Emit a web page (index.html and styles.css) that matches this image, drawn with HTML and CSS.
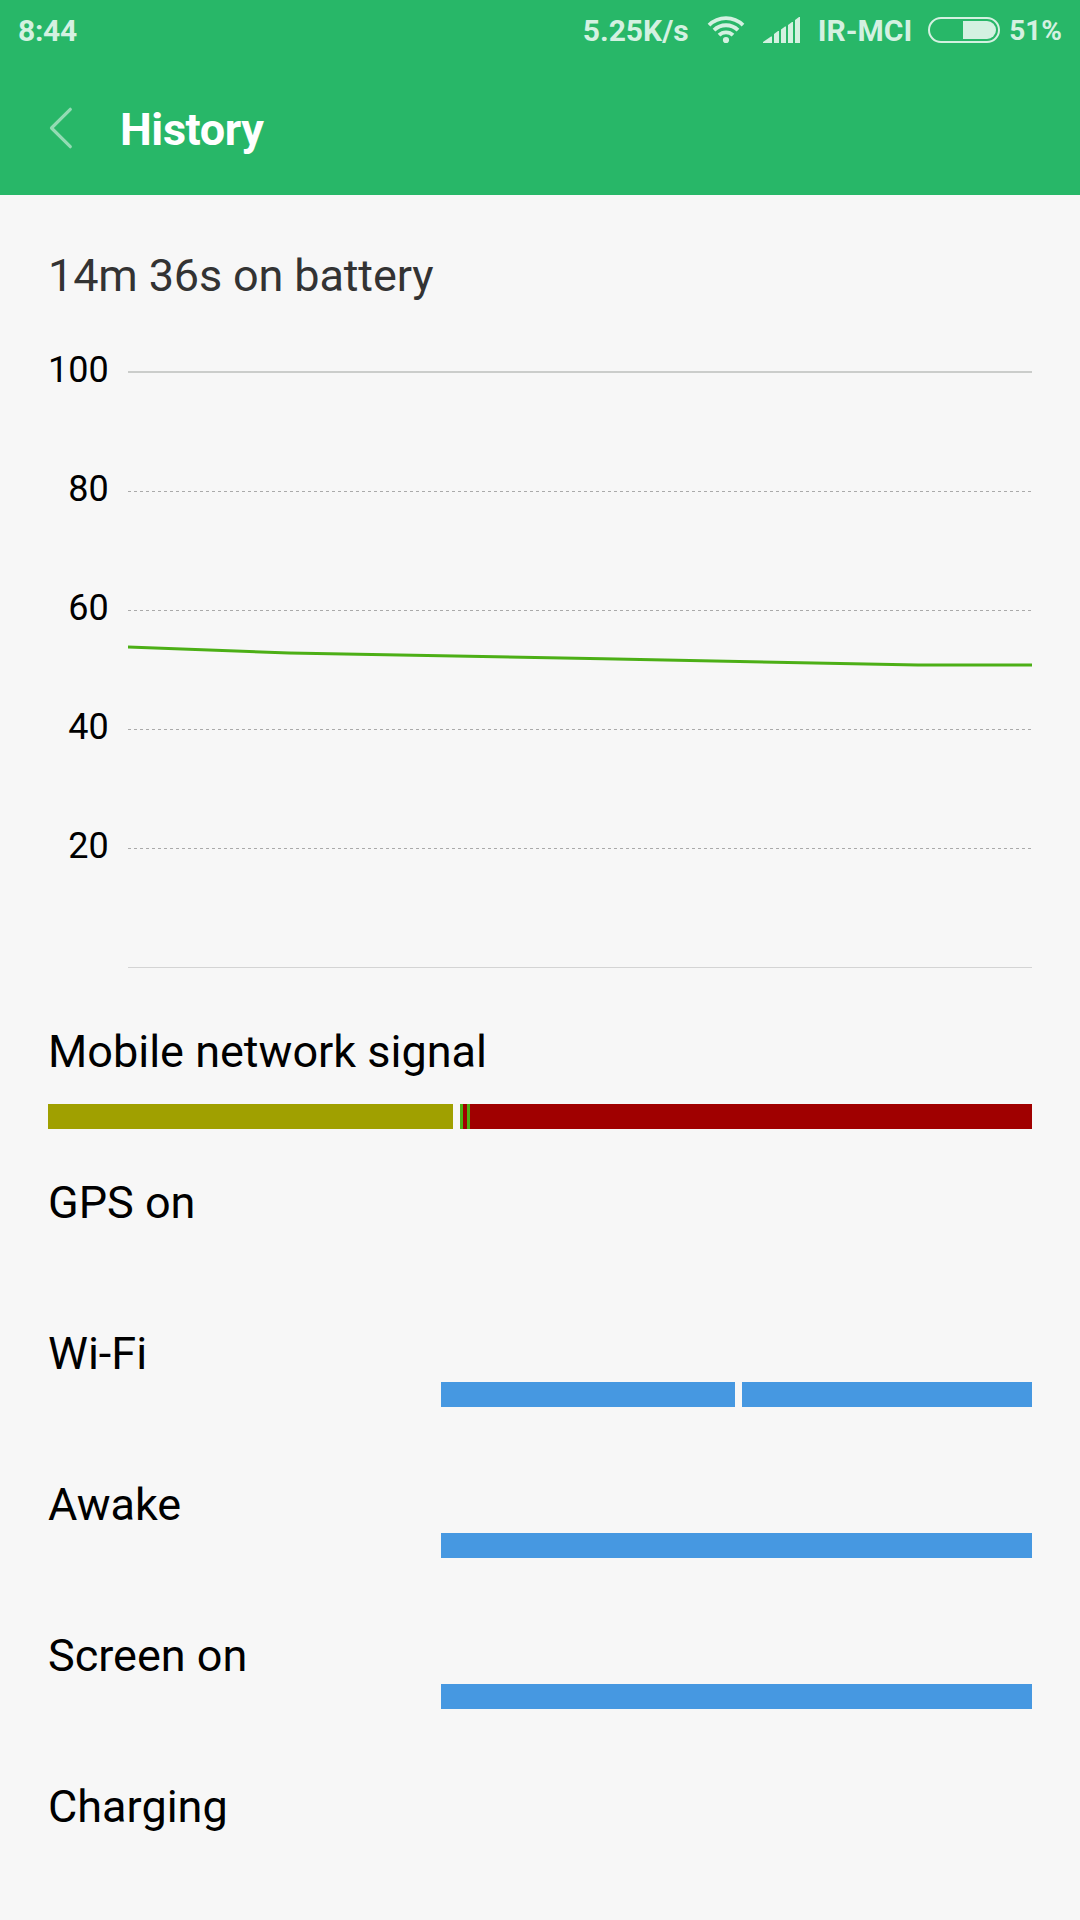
FILE: index.html
```html
<!DOCTYPE html>
<html lang="en">
<head>
<meta charset="utf-8">
<title>History</title>
<link rel="stylesheet" href="styles.css">
</head>
<body>
<header class="header">
  <div class="status">
    <span class="clock">8:44</span>
    <div class="status-right">
      <span class="speed">5.25K/s</span>
      <svg class="wifi" width="40" height="28" viewBox="0 0 40 28">
        <g fill="none" stroke="currentColor" stroke-width="3.8">
          <path d="M3 9.2A24 24 0 0 1 37 9.2"/>
          <path d="M8 14.2A17 17 0 0 1 32 14.2"/>
          <path d="M13 19.2A10 10 0 0 1 27 19.2"/>
        </g>
        <circle cx="20" cy="24" r="3.1" fill="currentColor"/>
      </svg>
      <svg class="signal" width="37" height="26" viewBox="0 0 37 26" fill="currentColor">
        <path d="M0 26V25L8 19.5H9V26ZM11 26V17L15 14H16V26ZM18 26V12.5L22 9.5H23V26ZM25 26V8L29 5H30V26ZM32 26V3L36 0H37V26Z"/>
      </svg>
      <span class="carrier">IR-MCI</span>
      <span class="battery"><span class="battery-level"></span></span>
      <span class="percent">51%</span>
    </div>
  </div>
  <div class="titlebar">
    <svg class="back" width="26" height="44" viewBox="0 0 26 44">
      <path d="M22.3 3.3L3.5 22L22.3 40.7" fill="none" stroke="currentColor" stroke-width="3.2" stroke-linecap="round" stroke-linejoin="round"/>
    </svg>
    <h1 class="title">History</h1>
  </div>
</header>
<main class="content">
  <h2 class="summary">14m 36s on battery</h2>
  <section class="chart">
    <div class="axis">
      <span>100</span><span>80</span><span>60</span><span>40</span><span>20</span>
    </div>
    <svg class="plot" width="904" height="600" viewBox="0 0 904 600">
      <path d="M0 1H904" stroke="#cbcdcb" stroke-width="2"/>
      <path d="M0 120.5H904M0 239.5H904M0 358.5H904M0 477.5H904" stroke="#aaaaaa" stroke-dasharray="3 3"/>
      <path d="M0 596.5H904" stroke="#d4d4d4"/>
      <path d="M0 276L161 282L475 287.7L790 294H904" fill="none" stroke="#4caf16" stroke-width="3"/>
    </svg>
  </section>
  <section class="rows">
    <div class="row signal-row">
      <h3 class="label">Mobile network signal</h3>
      <div class="track">
        <i class="bar olive" style="width:405px"></i><i class="bar" style="width:7px"></i><i class="bar green" style="width:3px"></i><i class="bar red" style="width:4px"></i><i class="bar green" style="width:3px"></i><i class="bar red" style="width:562px"></i>
      </div>
    </div>
    <div class="row"><h3 class="label">GPS on</h3></div>
    <div class="row">
      <h3 class="label">Wi-Fi</h3>
      <div class="track">
        <i class="bar" style="width:393px"></i><i class="bar blue" style="width:294px"></i><i class="bar" style="width:7px"></i><i class="bar blue" style="width:290px"></i>
      </div>
    </div>
    <div class="row">
      <h3 class="label">Awake</h3>
      <div class="track"><i class="bar" style="width:393px"></i><i class="bar blue" style="width:591px"></i></div>
    </div>
    <div class="row">
      <h3 class="label">Screen on</h3>
      <div class="track"><i class="bar" style="width:393px"></i><i class="bar blue" style="width:591px"></i></div>
    </div>
    <div class="row"><h3 class="label">Charging</h3></div>
  </section>
</main>
</body>
</html>
```
FILE: styles.css
```css
* {
  box-sizing: border-box;
}

body {
  margin: 0;
  width: 1080px;
  height: 1920px;
  overflow: hidden;
  background: #f7f7f7;
  color: #000;
  font-family: Roboto, "Liberation Sans", sans-serif;
}

h1, h2, h3 {
  margin: 0;
  font-weight: 400;
}

svg {
  display: block;
  flex: none;
}

.header {
  height: 195px;
  background: #28b768;
}

.status {
  display: flex;
  justify-content: space-between;
  height: 60px;
  padding: 0 18px;
  color: #d4f1e1;
  font-size: 30px;
  font-weight: 700;
  line-height: 61px;
  white-space: nowrap;
}

.clock {
  letter-spacing: -0.3px;
}

.status-right {
  display: flex;
  align-items: center;
}

.wifi {
  margin-left: 17px;
}

.signal {
  margin-left: 17px;
}

.carrier {
  margin-left: 18px;
}

.battery {
  display: flex;
  justify-content: flex-end;
  width: 72px;
  height: 26px;
  margin: 0 9px 0 16px;
  padding: 2px;
  border: 2px solid currentColor;
  border-radius: 13px;
}

.battery-level {
  width: 33px;
  height: 18px;
  border-radius: 0 9px 9px 0;
  background: currentColor;
}

.percent {
  font-size: 28px;
}

.titlebar {
  display: flex;
  align-items: center;
  height: 136px;
  padding-left: 48px;
}

.back {
  color: #93dbb4;
}

.title {
  margin-left: 46px;
  padding-top: 4px;
  color: #fff;
  font-size: 45px;
  font-weight: 700;
  line-height: 52px;
  letter-spacing: -0.4px;
}

.content {
  padding: 55px 48px 0;
}

.summary {
  height: 121px;
  color: #333;
  font-size: 45px;
  line-height: 52px;
  letter-spacing: -0.14px;
}

.chart {
  display: flex;
  justify-content: space-between;
  height: 655px;
}

.axis {
  display: grid;
  grid-auto-rows: 119px;
  width: 60px;
  margin-top: -22px;
  text-align: right;
  font-size: 36px;
  line-height: 42px;
}

.row {
  display: flex;
  flex-direction: column;
  height: 151px;
}

.label {
  font-size: 45px;
  line-height: 52px;
}

.track {
  display: flex;
  height: 25px;
  margin-top: 2px;
}

.signal-row .track {
  margin-top: 26px;
}

.bar {
  flex: none;
}

.olive {
  background: #a0a000;
}

.green {
  background: #4caf16;
}

.red {
  background: #a00000;
}

.blue {
  background: #4698e1;
}
```
